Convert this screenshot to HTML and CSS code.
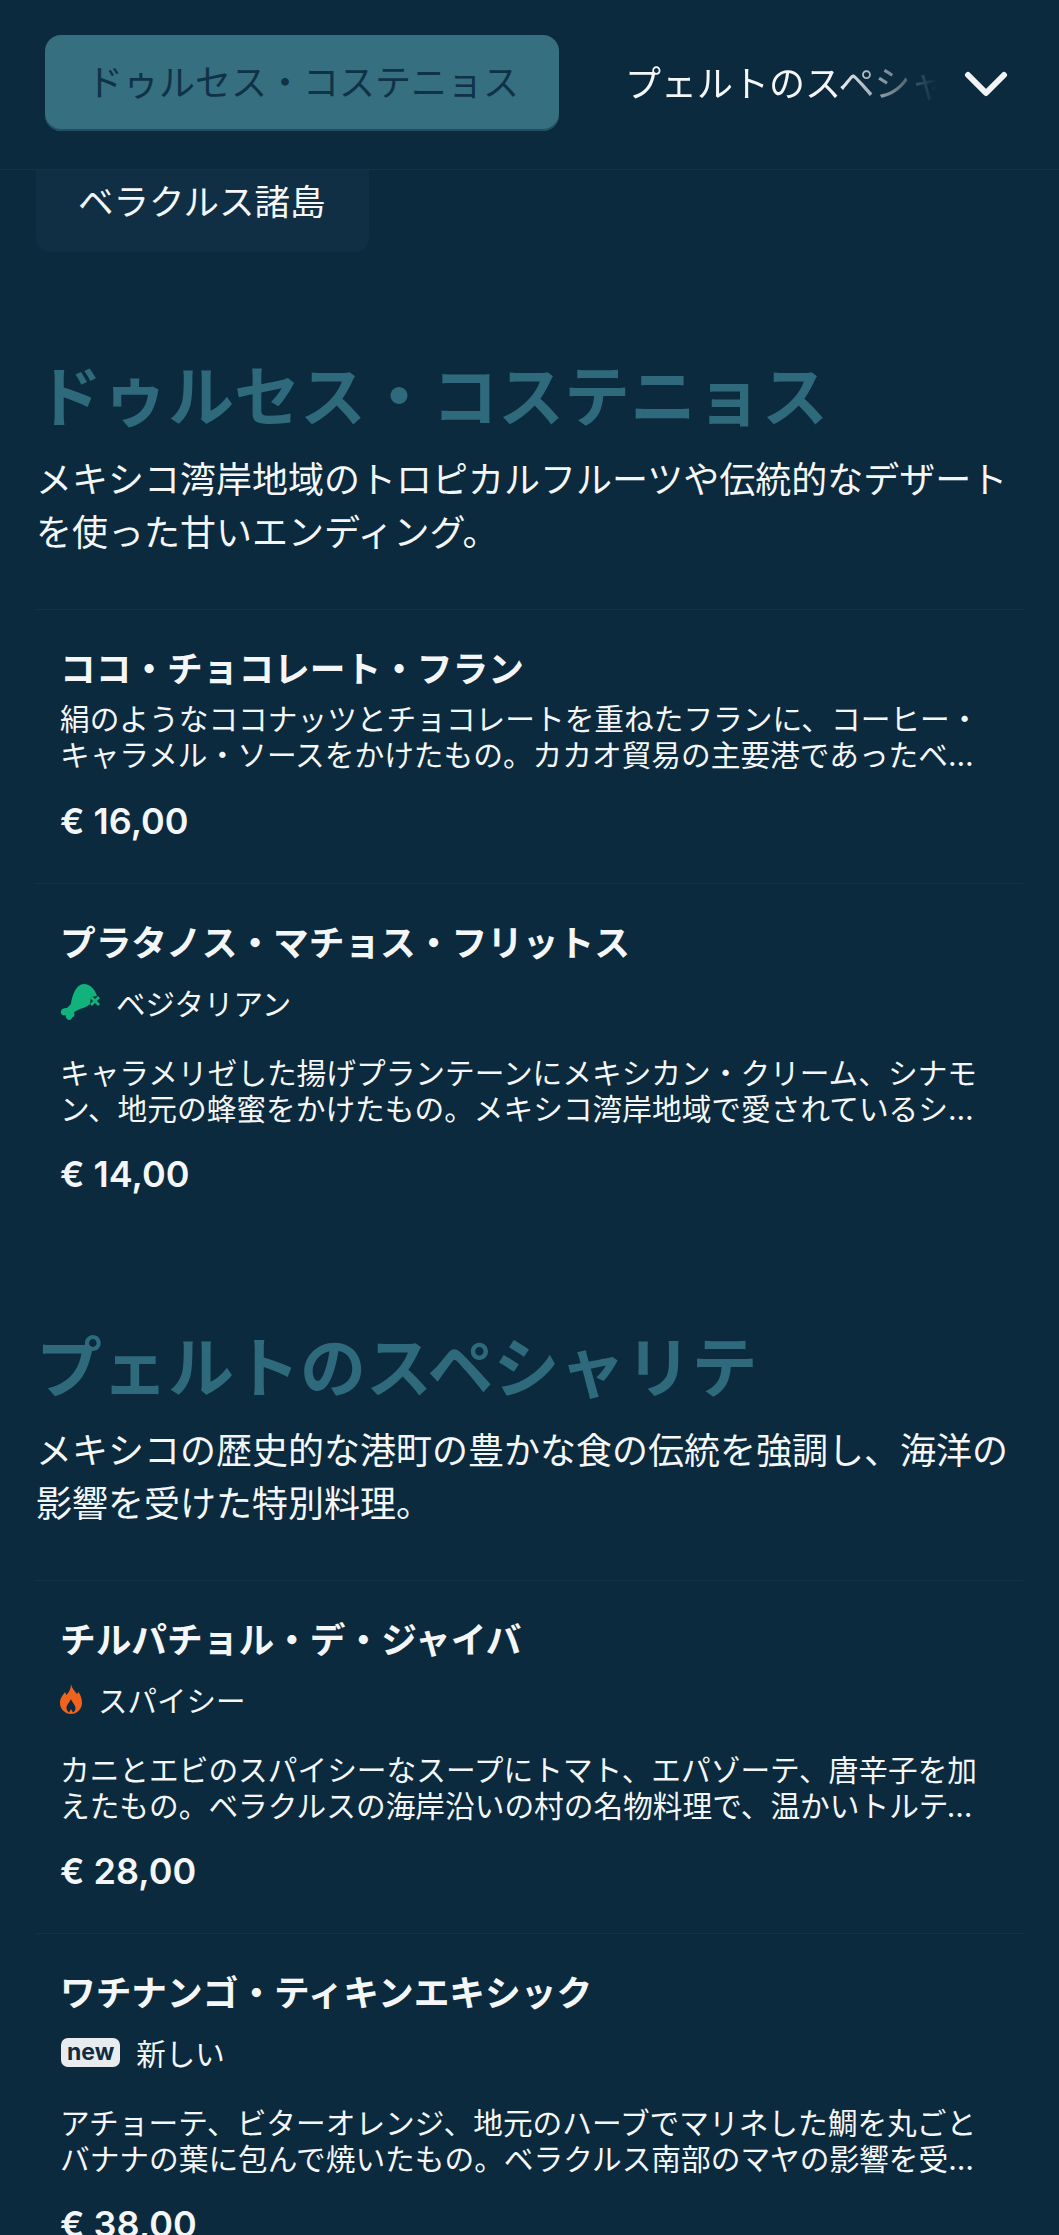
FILE: index.html
```html
<!DOCTYPE html>
<html lang="ja">
<head>
    <meta charset="UTF-8">
    <meta name="viewport" content="width=device-width, initial-scale=1.0">
    <title>メニュー</title>
    <link rel="stylesheet" href="styles.css">
</head>
<body>

    <header class="menu-header">
        <div class="tab tab-active">ドゥルセス・コステニョス</div>
        <div class="tab tab-next">プェルトのスペシャリテ</div>
        <svg class="chevron" viewBox="0 0 44 28" width="44" height="28">
            <path d="M4 5 L22 23 L40 5" fill="none" stroke="#f2f4f5" stroke-width="6" stroke-linecap="round" stroke-linejoin="round"/>
        </svg>
    </header>

    <div class="tab-card">ベラクルス諸島</div>

    <section class="menu-section">
        <h2>ドゥルセス・コステニョス</h2>
        <p class="section-intro">メキシコ湾岸地域のトロピカルフルーツや伝統的なデザートを使った甘いエンディング。</p>

        <article class="dish">
            <h3>ココ・チョコレート・フラン</h3>
            <p class="dish-text">絹のようなココナッツとチョコレートを重ねたフランに、コーヒー・キャラメル・ソースをかけたもの。カカオ貿易の主要港であったベラクルスの伝統を受け継ぐ一品です。</p>
            <div class="price">€ 16,00</div>
        </article>

        <article class="dish">
            <h3>プラタノス・マチョス・フリットス</h3>
            <div class="tag">
                <svg class="tag-icon" viewBox="0 0 40 37" width="40" height="37">
                    <path d="M24 0 C30 0 35 5 37 12 L31 13 L30 20 C27 23 23 24 20 25 L14 28 C15 31 14 34 12 33 C12 36 9 37 7 35 C5 33 6 31 6 31 C3 32 0 30 1 27 C2 24 5 24 7 24 L11 20 C12 12 16 0 24 0 Z" fill="#12b27c"/>
                    <path d="M31 13 L39 21 M39 13 L31 21" stroke="#12b27c" stroke-width="2.8" fill="none"/>
                </svg>
                <span>ベジタリアン</span>
            </div>
            <p class="dish-text">キャラメリゼした揚げプランテーンにメキシカン・クリーム、シナモン、地元の蜂蜜をかけたもの。メキシコ湾岸地域で愛されているシンプルなデザートです。</p>
            <div class="price">€ 14,00</div>
        </article>
    </section>

    <section class="menu-section">
        <h2>プェルトのスペシャリテ</h2>
        <p class="section-intro">メキシコの歴史的な港町の豊かな食の伝統を強調し、海洋の影響を受けた特別料理。</p>

        <article class="dish">
            <h3>チルパチョル・デ・ジャイバ</h3>
            <div class="tag">
                <svg class="tag-icon" viewBox="0 0 22 30" width="22" height="30">
                    <path fill-rule="evenodd" d="M11 0 C12 5 15 7 17 10 L18.500 8 C21 12 22 15 22 19 C22 25 17 30 11 30 C5 30 0 25 0 19 C0 14 3 11 5 8 L6.500 11 C9 8 11 5 11 0 Z M11 15 C9 19 6.500 21 6.500 24 C6.500 26 8 28 9 28.500 L11 25 L13 28.500 C14.500 27.500 15.500 26 15.500 24 C15.500 21 12.500 19 11 15 Z" fill="#f0631f"/>
                </svg>
                <span>スパイシー</span>
            </div>
            <p class="dish-text">カニとエビのスパイシーなスープにトマト、エパゾーテ、唐辛子を加えたもの。ベラクルスの海岸沿いの村の名物料理で、温かいトルティーヤを添えてお召し上がりください。</p>
            <div class="price">€ 28,00</div>
        </article>

        <article class="dish">
            <h3>ワチナンゴ・ティキンエキシック</h3>
            <div class="tag">
                <span class="new-badge">new</span>
                <span>新しい</span>
            </div>
            <p class="dish-text">アチョーテ、ビターオレンジ、地元のハーブでマリネした鯛を丸ごとバナナの葉に包んで焼いたもの。ベラクルス南部のマヤの影響を受けた伝統的な調理法です。</p>
            <div class="price">€ 38,00</div>
        </article>
    </section>

</body>
</html>
```

FILE: styles.css
```css
html, body {
    height: 100%;
}

body {
    margin: 0;
    background-color: #0b2a3e;
    color: #f4f6f7;
    font-family: "Noto Sans CJK JP", "Noto Sans", sans-serif;
    overflow: hidden;
}

.menu-header {
    display: flex;
    align-items: center;
    height: 169px;
    padding: 0 45px;
    border-bottom: 1px solid #133347;
    box-sizing: content-box;
}

.tab {
    flex-shrink: 0;
    font-size: 36px;
    line-height: 48px;
    white-space: nowrap;
}

.tab-active {
    width: 514px;
    height: 96px;
    margin-bottom: 3px;
    padding: 21px 0 0 42px;
    box-sizing: border-box;
    background-color: #356f80;
    box-shadow: inset 0 -2px 0 #1f4f60;
    border-radius: 16px;
    color: #0f3247;
}

.tab-next {
    width: 312px;
    margin-left: 66px;
    margin-bottom: 7px;
    overflow: hidden;
    -webkit-mask-image: linear-gradient(to right, #000 68%, transparent 100%);
    mask-image: linear-gradient(to right, #000 68%, transparent 100%);
}

.chevron {
    margin-left: 27px;
    margin-bottom: 2px;
    flex-shrink: 0;
}

.tab-card {
    width: 333px;
    margin-left: 36px;
    margin-bottom: 101px;
    padding: 0 0 22px 42px;
    box-sizing: border-box;
    background-color: #102f44;
    border-radius: 0 0 14px 14px;
    font-size: 35.500px;
    line-height: 60px;
}

.menu-section {
    padding: 0 36px;
}

.menu-section + .menu-section {
    margin-top: 88px;
}

h2 {
    margin: 0;
    color: #2f6a7c;
    font-size: 66px;
    font-weight: 700;
    line-height: 78px;
}

.section-intro {
    margin: 20px 0 52px;
    font-size: 36px;
    line-height: 53px;
}

.dish {
    padding: 32px 24px 40px;
    border-top: 1px solid #133347;
}

h3 {
    margin: 0;
    font-size: 35.700px;
    font-weight: 700;
    line-height: 50px;
}

.tag {
    display: flex;
    align-items: center;
    gap: 16px;
    height: 40px;
    margin-top: 16px;
    font-size: 29.500px;
}

.tag-icon {
    flex-shrink: 0;
}

.new-badge {
    margin-left: 1px;
    padding: 0 6px;
    background-color: #e9ecef;
    border-radius: 7px;
    color: #0f2c40;
    font-family: "Inter", sans-serif;
    font-size: 23px;
    font-weight: 700;
    line-height: 29px;
}

/* Inter first so the clamp ellipsis sits on the baseline */
.dish-text {
    display: -webkit-box;
    -webkit-box-orient: vertical;
    -webkit-line-clamp: 2;
    overflow: hidden;
    width: 935px;
    margin: 9px 0 0;
    font-family: "Inter", "Noto Sans CJK JP", sans-serif;
    font-size: 29.700px;
    line-height: 36px;
}

.tag + .dish-text {
    margin-top: 33px;
}

.price {
    margin-top: 26px;
    font-family: "Inter", sans-serif;
    font-size: 36px;
    font-weight: 600;
    line-height: 44px;
}

.tag + .dish-text + .price {
    margin-top: 25px;
}
```
